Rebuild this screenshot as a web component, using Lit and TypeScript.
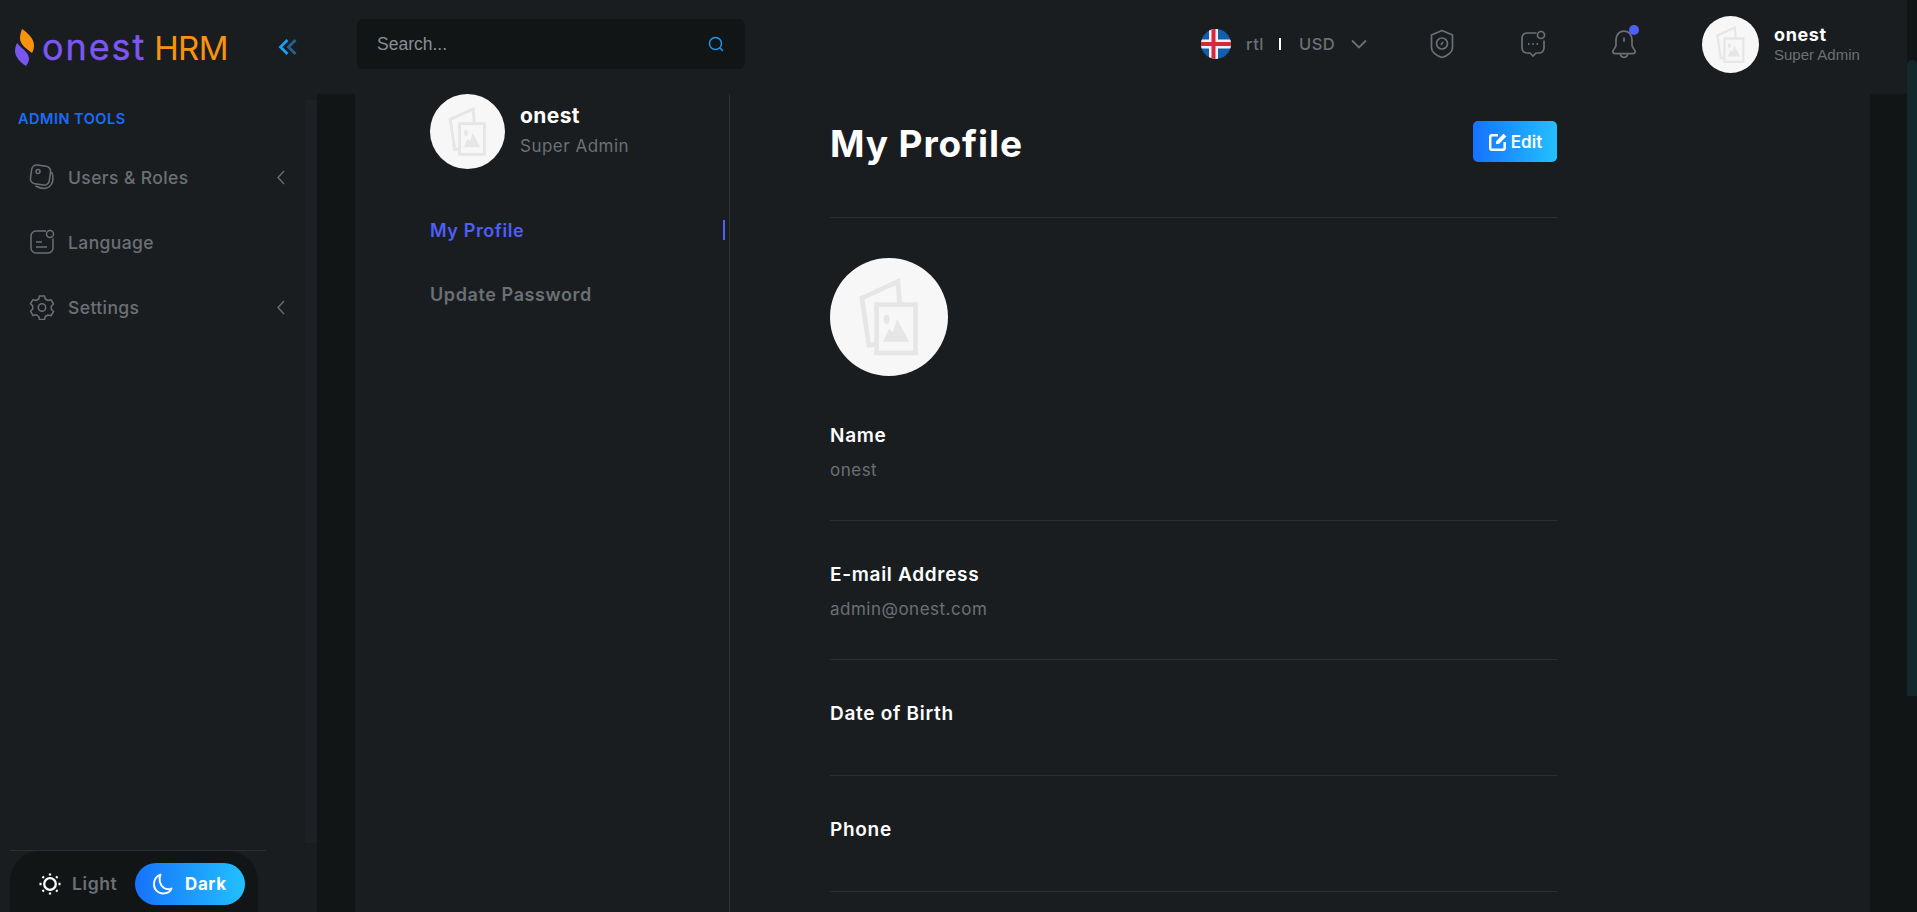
import {LitElement, css, html, svg} from 'lit';
import {customElement} from 'lit/decorators.js';

const placeholder = html`
	<svg class="ph" viewBox="0 0 100 100">
		<circle cx="50" cy="50" r="50" fill="#f7f7f7"></circle>
		<path d="M59 38 57.5 20 27 34l6 40 6-1" fill="none" stroke="#e6e6e6" stroke-width="4"></path>
		<rect x="39.500" y="39.500" width="33" height="41" fill="#f7f7f7" stroke="#e6e6e6" stroke-width="4"></rect>
		<ellipse cx="48" cy="52" rx="2.5" ry="4" fill="#e6e6e6"></ellipse>
		<path d="M45 71 50 60 53 63 57 52 67 71Z" fill="#e6e6e6"></path>
	</svg>
`;

const chevronLeft = svg`<path d="M8 1 2 7.5 8 14" fill="none" stroke="#6b7076" stroke-width="1.3"></path>`;

@customElement('app-root')
export class AppRoot extends LitElement {
	render() {
		return html`
			<div class="page">
				<div class="frame">
					${this.renderHeader()}
					<div class="body">
						${this.renderSidebar()}
						<div class="rail"><div class="rail-fill"></div></div>
						<div class="track"></div>
						<main class="card">
							${this.renderProfileNav()}
							${this.renderProfile()}
						</main>
					</div>
				</div>
				<div class="scrollbar"><div class="thumb"></div></div>
			</div>
		`;
	}

	private renderHeader() {
		return html`
			<header class="header">
				<div class="brand">
					<svg class="flame" width="28" height="44" viewBox="0 0 28 44">
						<path d="M9 4C15 8 21 14 21 20c0 4-1 6-2 8C14 24 7 20 7 13c0-3 1-6 2-9Z" fill="#f7930e"></path>
						<path d="M4 18c4 5 12 9 12 16 0 3-2 5-3 7C8 38 2 32 2 26c0-3 1-6 2-8Z" fill="#7a55f0"></path>
					</svg>
					<span class="logo"><span class="logo-a">onest</span><span class="logo-b">HRM</span></span>
				</div>
				<svg class="collapse" width="20" height="18" viewBox="0 0 20 18">
					<path d="M17.500 2 10.500 9l7 7" fill="none" stroke="#27608f" stroke-width="2.8"></path>
					<path d="M9.500 2 2.500 9l7 7" fill="none" stroke="#1c9cf5" stroke-width="2.8"></path>
				</svg>
				<div class="search">
					<span>Search...</span>
					<svg width="18" height="18" viewBox="0 0 18 18" fill="none" stroke="#1c9cf5" stroke-width="1.4">
						<circle cx="8.500" cy="8.500" r="6"></circle>
						<path d="m13 13 3 3"></path>
					</svg>
				</div>
				<div class="lang">
					<svg class="flag" width="30" height="30" viewBox="0 0 30 30">
						<clipPath id="flag-clip"><circle cx="15" cy="15" r="15"></circle></clipPath>
						<g clip-path="url(#flag-clip)">
							<rect width="30" height="30" fill="#1260ad"></rect>
							<rect x="8" width="9" height="30" fill="#f1f1f1"></rect>
							<rect y="10.500" width="30" height="9" fill="#f1f1f1"></rect>
							<rect x="10.500" width="4" height="30" fill="#d8263c"></rect>
							<rect y="13" width="30" height="4" fill="#d8263c"></rect>
						</g>
					</svg>
					<span class="rtl">rtl</span>
					<span class="sep"></span>
					<span class="usd">USD</span>
					<svg width="18" height="10" viewBox="0 0 18 10"><path d="M2 1.500 9 8.500l7-7" fill="none" stroke="#6b7076" stroke-width="1.8"></path></svg>
				</div>
				<div class="tools">
					<svg width="26" height="30" viewBox="0 0 26 30" fill="none" stroke="#6b7076" stroke-width="1.7">
						<path d="M13 1.500 23.500 6v13c0 4-5 8-10.500 9.500C7.500 27 2.500 23 2.500 19V6Z" stroke-linejoin="round"></path>
						<circle cx="13" cy="14.500" r="5.500"></circle>
						<path d="M12 16l2-3"></path>
					</svg>
					<svg width="26" height="28" viewBox="0 0 26 28" fill="none" stroke="#6b7076" stroke-width="1.7">
						<path d="M16.500 3H7a5 5 0 0 0-5 5v10a5 5 0 0 0 5 5h3l3 3 3-3h3a5 5 0 0 0 5-5v-7.500"></path>
						<circle cx="21" cy="5" r="3.500"></circle>
						<path d="M8 14h1.400M12.300 14h1.400M16.600 14h1.400" stroke-width="1.800"></path>
					</svg>
					<div class="bell">
						<svg width="26" height="32" viewBox="0 0 24 30" fill="none" stroke="#6b7076" stroke-width="1.6">
							<path d="M12 3c-5 0-7.500 4-7.500 8v5c0 3-3 4-3 6 0 1 1 2 2.500 2h16c1.500 0 2.500-1 2.500-2 0-2-3-3-3-6v-5c0-4-2.500-8-7.500-8Z" stroke-linejoin="round"></path>
							<path d="M8.500 24.500c.5 2 2 3 3.500 3s3-1 3.500-3M12 9v4"></path>
						</svg>
						<span class="dot"></span>
					</div>
				</div>
				<div class="user">
					<div class="user-ph">${placeholder}</div>
					<div>
						<div class="user-name">onest</div>
						<div class="user-role">Super Admin</div>
					</div>
				</div>
			</header>
		`;
	}

	private renderSidebar() {
		return html`
			<aside class="sidebar">
				<div class="side-title">ADMIN TOOLS</div>
				<nav class="side-nav">
					<div class="side-item">
						<svg width="26" height="26" viewBox="0 0 26 26" fill="none" stroke="#6b7076" stroke-width="1.500">
							<rect x="2" y="1.500" width="19" height="19" rx="5" transform="rotate(8 11 11)"></rect>
							<path d="M22.500 8c2 3 2 9 0 12-1.500 3-4 4-7 4.500-3 0-6-1-9-2.500"></path>
							<circle cx="9" cy="7.500" r="2"></circle>
						</svg>
						<span class="side-label">Users &amp; Roles</span>
						<svg class="side-chev" width="10" height="15" viewBox="0 0 10 15">${chevronLeft}</svg>
					</div>
					<div class="side-item">
						<svg width="26" height="26" viewBox="0 0 26 26" fill="none" stroke="#6b7076" stroke-width="1.500">
							<path d="M17 2H7a5 5 0 0 0-5 5v12a5 5 0 0 0 5 5h12a5 5 0 0 0 5-5V9.500"></path>
							<circle cx="21" cy="5" r="3.500"></circle>
							<path d="M7 13h6M7 18h11"></path>
						</svg>
						<span class="side-label">Language</span>
					</div>
					<div class="side-item">
						<svg width="26" height="26" viewBox="0 0 26 26" fill="none" stroke="#6b7076" stroke-width="1.500">
							<path d="M10.500 2h5l.8 3 2.700 1.500 3-.8 2.500 4.300-2.200 2.200v3.100l2.200 2.200-2.500 4.300-3-.8-2.700 1.500-.8 3h-5l-.8-3L7 20.700l-3 .8L1.500 17.200l2.200-2.200v-3.100L1.500 9.700 4 5.700l3 .8 2.700-1.500Z" stroke-linejoin="round"></path>
							<circle cx="13" cy="13.500" r="3.700"></circle>
						</svg>
						<span class="side-label">Settings</span>
						<svg class="side-chev" width="10" height="15" viewBox="0 0 10 15">${chevronLeft}</svg>
					</div>
				</nav>
				<div class="theme">
					<div class="theme-pill">
						<div class="light">
							<svg width="22" height="22" viewBox="0 0 22 22" fill="none" stroke="#fff" stroke-width="2.300">
								<circle cx="11" cy="11" r="5.800"></circle>
								<path d="M11 0.500v2M11 19.500v2M0.500 11h2M19.500 11h2M3.500 3.500l1.400 1.400M17.100 17.100l1.400 1.400M3.500 18.500l1.400-1.400M17.100 4.900l1.400-1.400"></path>
							</svg>
							<span>Light</span>
						</div>
						<div class="dark">
							<svg width="22" height="22" viewBox="0 0 22 22" fill="none" stroke="#fff" stroke-width="1.900">
								<path d="M8.500 1.500C5 3 2 6 2 11a9 9 0 0 0 9 9.500c4 0 7.500-2 8.500-5-2 1-5 1-7.500-.5-4.500-3-5.500-9-3.500-13.500Z" stroke-linejoin="round"></path>
							</svg>
							<span>Dark</span>
						</div>
					</div>
				</div>
			</aside>
		`;
	}

	private renderProfileNav() {
		return html`
			<section class="pnav">
				<div class="pnav-head">
					<div class="pnav-ph">${placeholder}</div>
					<div>
						<div class="pnav-name">onest</div>
						<div class="pnav-role">Super Admin</div>
					</div>
				</div>
				<div class="pnav-item active">My Profile</div>
				<div class="pnav-item">Update Password</div>
			</section>
		`;
	}

	private renderProfile() {
		return html`
			<section class="profile">
				<div class="title-row">
					<h1>My Profile</h1>
					<button class="edit">
						<svg width="20" height="20" viewBox="0 0 18 18" fill="none" stroke="#fff" stroke-width="2.200">
							<path d="M9 3H3.500A1.500 1.500 0 0 0 2 4.500v10A1.500 1.500 0 0 0 3.500 16h10a1.500 1.500 0 0 0 1.500-1.500V9"></path>
							<path d="M7 11 7.500 8l6.500-6.500 2.500 2.500L10 10.500Z" fill="#fff" stroke="none"></path>
						</svg>
						Edit
					</button>
				</div>
				<div class="big-ph">${placeholder}</div>
				<div class="field name">
					<div class="field-label">Name</div>
					<div class="field-value">onest</div>
				</div>
				<div class="field email">
					<div class="field-label">E-mail Address</div>
					<div class="field-value">admin@onest.com</div>
				</div>
				<div class="field empty">
					<div class="field-label">Date of Birth</div>
				</div>
				<div class="field empty">
					<div class="field-label">Phone</div>
				</div>
			</section>
		`;
	}

	static styles = css`
		:host {
			display: block;
			font-family: Inter, 'Noto Sans', sans-serif;
		}

		* {
			box-sizing: border-box;
		}

		.page {
			display: flex;
			width: 1917px;
			height: 912px;
			overflow: hidden;
			background: #1a1d20;
		}

		.frame {
			display: flex;
			flex-direction: column;
			width: 1907px;
		}

		.scrollbar {
			width: 10px;
			padding-top: 60px;
			background: #121516;
		}

		.thumb {
			height: 636px;
			border-radius: 5px 5px 0 0;
			background: #14282c;
		}

		.ph {
			display: block;
			width: 100%;
			height: 100%;
		}

		/* header */
		.header {
			display: flex;
			align-items: center;
			height: 94px;
			padding: 0 0 6px 13px;
			flex: none;
		}

		.brand {
			display: flex;
			align-items: center;
			width: 265px;
			margin-top: 5px;
		}

		.logo {
			margin-left: 1px;
			font-size: 33px;
			font-weight: 400;
			line-height: 1;
			white-space: nowrap;
		}

		.logo-a {
			color: #7c57f2;
			font-size: 36px;
			letter-spacing: 1.9px;
			-webkit-text-stroke: 0.4px currentColor;
		}

		.logo-b {
			margin-left: 8px;
			color: #f7930e;
			letter-spacing: -0.6px;
		}

		.collapse {
			margin-top: 5px;
		}

		.search {
			display: flex;
			align-items: center;
			justify-content: space-between;
			width: 388px;
			height: 50px;
			margin-left: 59px;
			padding: 0 20px 0 20px;
			border-radius: 6px;
			background: #121516;
			color: #8a8e93;
			font-family: 'Liberation Sans', sans-serif;
			font-size: 17.5px;
		}

		.lang {
			display: flex;
			align-items: center;
			margin-left: 456px;
			width: 176px;
			color: #6b7076;
			font-size: 16.5px;
			font-weight: 500;
			letter-spacing: 0.5px;
		}

		.rtl {
			margin-left: 15px;
		}

		.sep {
			width: 2px;
			height: 12px;
			margin: 0 18px 0 15px;
			background: #fff;
		}

		.usd {
			margin-right: 15px;
		}

		.tools {
			display: flex;
			align-items: center;
			gap: 65px;
			margin-left: 52px;
		}

		.bell {
			position: relative;
			display: flex;
		}

		.dot {
			position: absolute;
			top: -3px;
			right: -2px;
			width: 10px;
			height: 10px;
			border-radius: 50%;
			background: #4e5ff5;
		}

		.user {
			display: flex;
			align-items: center;
			gap: 15px;
			margin-left: 65px;
		}

		.user-ph {
			width: 57px;
			height: 57px;
			margin-top: 1px;
		}

		.user-name {
			color: #fff;
			font-size: 18px;
			font-weight: 700;
			letter-spacing: 0.6px;
			line-height: 22px;
		}

		.user-role {
			color: #6b7076;
			font-family: 'Liberation Sans', sans-serif;
			font-size: 15px;
			line-height: 18px;
		}

		/* layout */
		.body {
			display: flex;
			flex: 1;
			min-height: 0;
			background: #121516;
		}

		.rail {
			display: flex;
			width: 12px;
			flex: none;
			padding: 6px 0 69px;
			background: #1a1d20;
		}

		.rail-fill {
			flex: 1;
			background: #1d2024;
		}

		.track {
			width: 38px;
			flex: none;
		}

		.card {
			display: flex;
			width: 1515px;
			flex: none;
			background: #1a1d20;
		}

		/* sidebar */
		.sidebar {
			display: flex;
			flex-direction: column;
			width: 305px;
			flex: none;
			background: #1a1d20;
		}

		.side-title {
			margin: 16px 0 0 18px;
			color: #1a6cff;
			font-size: 14.5px;
			font-weight: 600;
			letter-spacing: 0.5px;
			line-height: 17px;
		}

		.side-nav {
			display: flex;
			flex-direction: column;
			gap: 25px;
			margin-top: 30px;
			padding-left: 29px;
		}

		.side-item {
			display: flex;
			align-items: center;
			width: 257px;
			height: 40px;
			gap: 13px;
			color: #6b7076;
		}

		.side-label {
			font-size: 17.5px;
			font-weight: 500;
			letter-spacing: 0.4px;
		}

		.side-chev {
			margin-left: auto;
		}

		.theme {
			margin-top: auto;
			width: 256px;
			margin-left: 10px;
			border-top: 1px solid #2b2f34;
		}

		.theme-pill {
			display: flex;
			align-items: center;
			justify-content: space-between;
			width: 248px;
			height: 61px;
			padding: 4px 13px 0 29px;
			border-radius: 30px 30px 0 0;
			background: #121516;
		}

		.light {
			display: flex;
			align-items: center;
			gap: 11px;
			color: #6b7076;
			font-size: 17.5px;
			font-weight: 600;
			letter-spacing: 0.6px;
		}

		.dark {
			display: flex;
			align-items: center;
			gap: 11px;
			width: 110px;
			height: 42px;
			padding-left: 17px;
			border-radius: 21px;
			background: linear-gradient(90deg, #1672ff, #22c0ff);
			color: #fff;
			font-size: 17px;
			font-weight: 700;
			letter-spacing: 0.6px;
		}

		/* profile nav */
		.pnav {
			width: 375px;
			padding-left: 75px;
			border-right: 1px solid #2b2f34;
			flex: none;
		}

		.pnav-head {
			display: flex;
			align-items: center;
			gap: 15px;
			margin-bottom: 29px;
		}

		.pnav-ph {
			width: 75px;
			height: 75px;
		}

		.pnav-head > div:last-child {
			margin-top: -4px;
		}

		.pnav-name {
			color: #fff;
			font-size: 21px;
			font-weight: 700;
			letter-spacing: 0.4px;
			line-height: 26px;
			margin-bottom: 7px;
		}

		.pnav-role {
			color: #6b7076;
			font-size: 17px;
			letter-spacing: 0.5px;
			line-height: 20px;
		}

		.pnav-item {
			position: relative;
			height: 64px;
			display: flex;
			align-items: center;
			color: #6b7076;
			font-size: 18px;
			font-weight: 600;
			letter-spacing: 0.6px;
		}

		.pnav-item.active {
			color: #4e5ff5;
		}

		.pnav-item.active::after {
			content: '';
			position: absolute;
			top: 22px;
			right: 4px;
			width: 2px;
			height: 20px;
			background: #4e5ff5;
		}

		/* profile */
		.profile {
			width: 727px;
			margin-left: 100px;
			flex: none;
		}

		.title-row {
			display: flex;
			align-items: flex-start;
			justify-content: space-between;
			height: 124px;
			padding-top: 27px;
			border-bottom: 1px solid #2b2f34;
		}

		h1 {
			margin: 0;
			color: #fff;
			font-size: 37px;
			font-weight: 700;
			letter-spacing: 0.9px;
			line-height: 46px;
		}

		.edit {
			display: flex;
			align-items: center;
			justify-content: center;
			gap: 3px;
			width: 84px;
			height: 41px;
			padding: 0;
			border: 0;
			border-radius: 5px;
			background: linear-gradient(90deg, #1672ff, #22c0ff);
			color: #fff;
			font: inherit;
			font-size: 17px;
			font-weight: 600;
		}

		.big-ph {
			width: 118px;
			height: 118px;
			margin-top: 40px;
		}

		.field {
			border-bottom: 1px solid #2b2f34;
		}

		.field.name {
			height: 145px;
			padding-top: 48px;
		}

		.field.email {
			height: 139px;
			padding-top: 42px;
		}

		.field.empty {
			height: 116px;
			padding-top: 42px;
		}

		.field-label {
			color: #fff;
			font-size: 19px;
			font-weight: 600;
			letter-spacing: 0.7px;
			line-height: 24px;
		}

		.field-value {
			margin-top: 11px;
			color: #6b7076;
			font-size: 17px;
			letter-spacing: 0.5px;
			line-height: 22px;
		}
	`;
}

declare global {
	interface HTMLElementTagNameMap {
		'app-root': AppRoot;
	}
}
